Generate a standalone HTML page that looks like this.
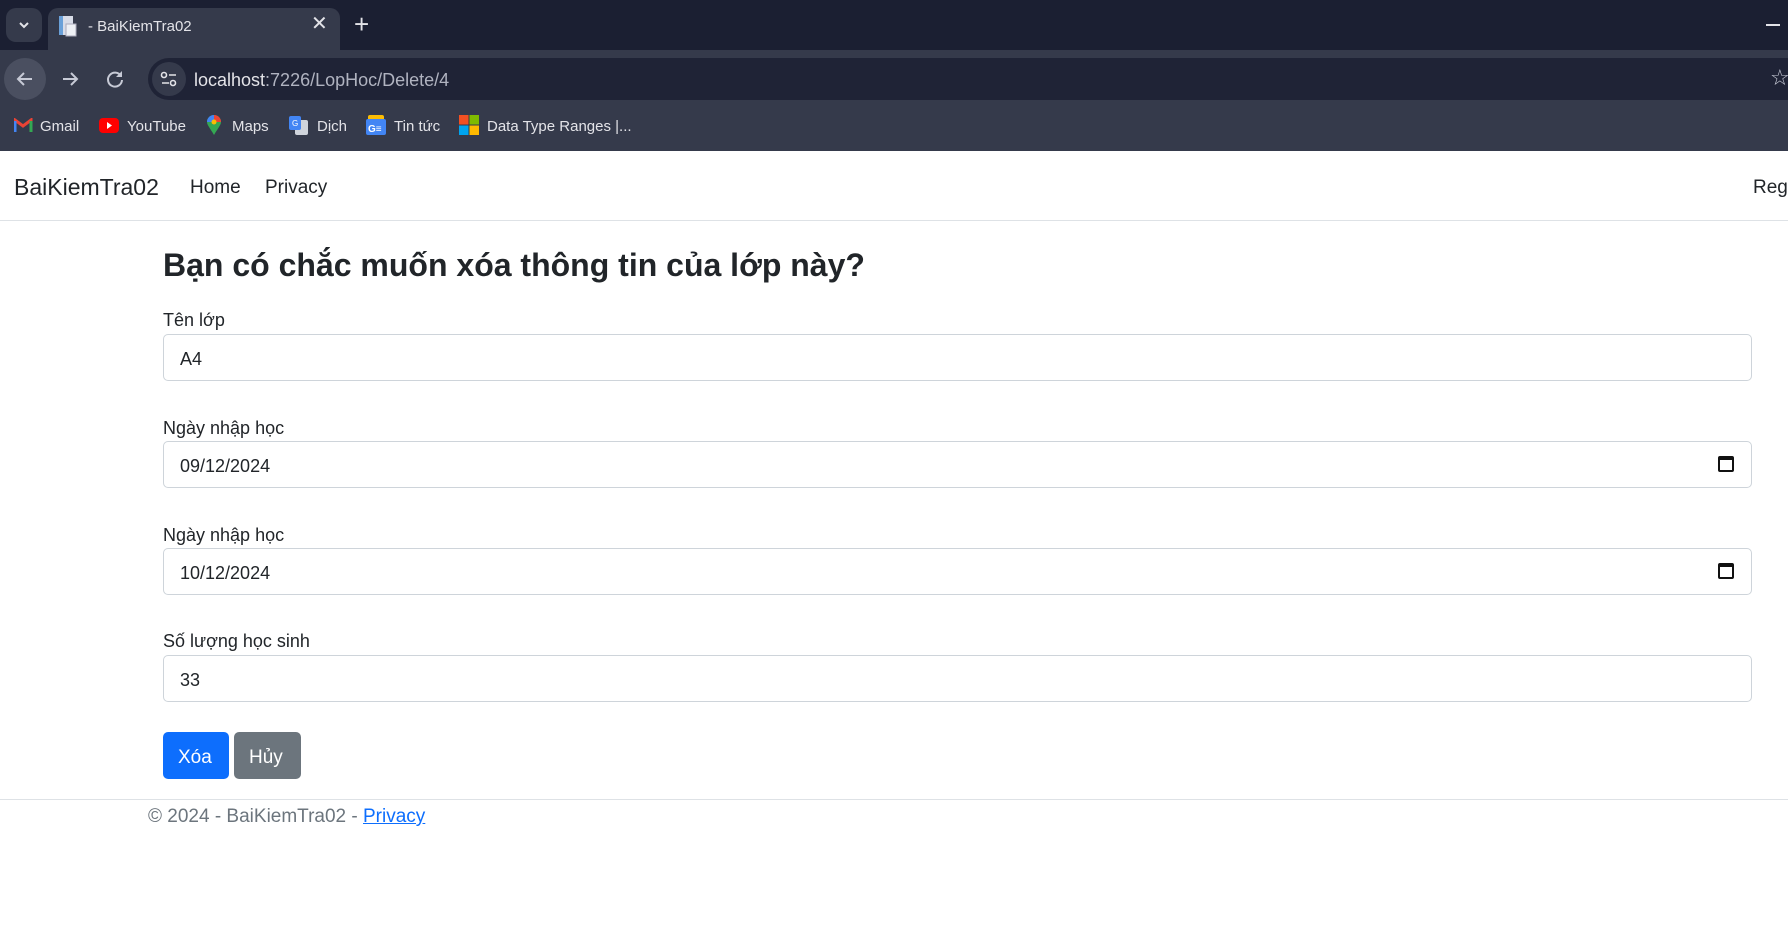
<!DOCTYPE html>
<html><head><meta charset="utf-8"><style>
*{box-sizing:border-box;margin:0;padding:0}
body{width:1788px;height:928px;overflow:hidden;background:#fff;font-family:"Liberation Sans","DejaVu Sans",sans-serif;color:#212529;position:relative}
.abs{position:absolute}
.tabbar{left:0;top:0;width:1788px;height:50px;background:#1b1f32}
.toolbar{left:0;top:50px;width:1788px;height:101px;background:#353a4b}
.omni{left:148px;top:58px;width:1660px;height:42px;border-radius:21px;background:#1f2336}
.tab{left:48px;top:8px;width:292px;height:42px;background:#353a4b;border-radius:10px 10px 0 0}
.t{white-space:nowrap;line-height:1}
.bm{top:119px;font-size:15px;color:#e3e3e8}
.input{position:absolute;left:163px;width:1589px;height:47px;border:1px solid #ced4da;border-radius:5px;background:#fff}
.input span{position:absolute;left:16px;top:15px;font-size:18px;color:#212529}
.lbl{position:absolute;left:163px;font-size:18px;color:#212529}
.cal{position:absolute;right:17px;top:14px;width:16px;height:16px;border:2px solid #111;border-top-width:4px;border-radius:2px}
</style></head><body>
<div class="abs tabbar"></div>
<div class="abs" style="left:6px;top:8px;width:36px;height:34px;border-radius:10px;background:#353a4b"></div>
<svg class="abs" style="left:17px;top:18px" width="14" height="14"><path d="M3 5l4 4 4-4" stroke="#e3e3e8" stroke-width="2" fill="none"/></svg>
<div class="abs tab"></div>
<svg class="abs" style="left:58px;top:15px" width="20" height="22"><rect x="1" y="1" width="14" height="19" fill="#d8dce8"/><rect x="1" y="1" width="4" height="19" fill="#6aa0d8"/><rect x="8" y="9" width="10" height="12" fill="#eef0f5" stroke="#aab" stroke-width="1"/></svg>
<div class="abs t" style="left:88px;top:19px;font-size:15px;color:#e3e3e8">- BaiKiemTra02</div>
<div class="abs t" style="left:311px;top:14px;font-size:20px;color:#e3e3e8">✕</div>
<div class="abs t" style="left:354px;top:11px;font-size:26px;color:#e3e3e8">+</div>
<div class="abs" style="left:1766px;top:24px;width:14px;height:1.5px;background:#e3e3e8"></div>
<div class="abs toolbar"></div>
<div class="abs" style="left:4px;top:58px;width:42px;height:42px;border-radius:21px;background:#4a4f60"></div>
<svg class="abs" style="left:14px;top:68px" width="22" height="22"><path d="M18 11H4M10 5l-6 6 6 6" stroke="#c7cad6" stroke-width="2" fill="none"/></svg>
<svg class="abs" style="left:59px;top:68px" width="22" height="22"><path d="M4 11h14M12 5l6 6-6 6" stroke="#c7cad6" stroke-width="2" fill="none"/></svg>
<svg class="abs" style="left:104px;top:68px" width="22" height="22"><path d="M17 8A7 7 0 1 0 18 12" stroke="#c7cad6" stroke-width="2" fill="none"/><path d="M18 3v6h-6" fill="#c7cad6"/></svg>
<div class="abs omni"></div>
<div class="abs" style="left:152px;top:62px;width:34px;height:34px;border-radius:17px;background:#353a4b"></div>
<svg class="abs" style="left:160px;top:70px" width="18" height="18"><circle cx="4" cy="5" r="2.5" stroke="#e3e3e8" stroke-width="1.6" fill="none"/><path d="M9 5h7M2 13h7" stroke="#e3e3e8" stroke-width="1.6"/><circle cx="13" cy="13" r="2.5" stroke="#e3e3e8" stroke-width="1.6" fill="none"/></svg>
<div class="abs t" style="left:194px;top:71px;font-size:18px;color:#e3e3e8">localhost<span style="color:#b0b3c0">:7226/LopHoc/Delete/4</span></div>
<div class="abs t" style="left:1770px;top:67px;font-size:22px;color:#c7cad6">☆</div>
<svg class="abs" style="left:14px;top:118px" width="19" height="15"><path d="M1 14V2l8 6 8-6v12" stroke="#ea4335" stroke-width="3" fill="none"/><path d="M1 14V3" stroke="#4285f4" stroke-width="3"/><path d="M17 14V3" stroke="#34a853" stroke-width="3"/></svg>
<div class="abs t bm" style="left:40px">Gmail</div>
<svg class="abs" style="left:99px;top:118px" width="20" height="15"><rect width="20" height="15" rx="4" fill="#f00"/><path d="M8 4v7l5-3.5z" fill="#fff"/></svg>
<div class="abs t bm" style="left:127px">YouTube</div>
<svg class="abs" style="left:207px;top:115px" width="14" height="20"><path d="M7 20C3 13 0 10 0 7a7 7 0 0 1 14 0c0 3-3 6-7 13z" fill="#34a853"/><path d="M0 7a7 7 0 0 1 7-7v7z" fill="#4285f4"/><path d="M7 0a7 7 0 0 1 7 7H7z" fill="#ea4335"/><circle cx="7" cy="7" r="2.5" fill="#fbbc04"/></svg>
<div class="abs t bm" style="left:232px">Maps</div>
<svg class="abs" style="left:289px;top:116px" width="20" height="19"><rect x="6" y="4" width="13" height="15" rx="2" fill="#d0d4dc"/><rect width="12" height="14" rx="2" fill="#4285f4"/><text x="3" y="10" font-size="8" fill="#fff" font-family="Liberation Sans">G</text></svg>
<div class="abs t bm" style="left:317px">Dịch</div>
<svg class="abs" style="left:366px;top:115px" width="20" height="20"><rect x="2" y="0" width="16" height="6" rx="2" fill="#fbbc04"/><rect y="4" width="20" height="16" rx="2" fill="#4285f4"/><text x="2" y="17" font-size="10" fill="#fff" font-weight="bold" font-family="Liberation Sans">G≡</text></svg>
<div class="abs t bm" style="left:394px">Tin tức</div>
<svg class="abs" style="left:459px;top:115px" width="20" height="20"><rect width="9.5" height="9.5" fill="#f25022"/><rect x="10.5" width="9.5" height="9.5" fill="#7fba00"/><rect y="10.5" width="9.5" height="9.5" fill="#00a4ef"/><rect x="10.5" y="10.5" width="9.5" height="9.5" fill="#ffb900"/></svg>
<div class="abs t bm" style="left:487px">Data Type Ranges |...</div>

<div class="abs" style="left:0;top:220px;width:1788px;height:1px;background:#dee2e6"></div>
<div class="abs t" style="left:14px;top:176px;font-size:23px;color:#212529">BaiKiemTra02</div>
<div class="abs t" style="left:190px;top:178px;font-size:19px;color:#212529">Home</div>
<div class="abs t" style="left:265px;top:178px;font-size:19px;color:#212529">Privacy</div>
<div class="abs t" style="left:1753px;top:178px;font-size:19px;color:#212529">Register</div>

<div class="abs t" style="left:163px;top:249px;font-size:32px;font-weight:bold;color:#212529">Bạn có chắc muốn xóa thông tin của lớp này?</div>

<div class="lbl t" style="top:311px">Tên lớp</div>
<div class="input" style="top:334px"><span class="t">A4</span></div>
<div class="lbl t" style="top:419px">Ngày nhập học</div>
<div class="input" style="top:441px"><span class="t">09/12/2024</span><div class="cal"></div></div>
<div class="lbl t" style="top:526px">Ngày nhập học</div>
<div class="input" style="top:548px"><span class="t">10/12/2024</span><div class="cal"></div></div>
<div class="lbl t" style="top:632px">Số lượng học sinh</div>
<div class="input" style="top:655px"><span class="t">33</span></div>

<div class="abs" style="left:163px;top:732px;width:66px;height:47px;background:#0d6efd;border-radius:5px"></div>
<div class="abs t" style="left:178px;top:748px;font-size:19px;color:#fff">Xóa</div>
<div class="abs" style="left:234px;top:732px;width:67px;height:47px;background:#6c757d;border-radius:5px"></div>
<div class="abs t" style="left:249px;top:748px;font-size:19px;color:#fff">Hủy</div>

<div class="abs" style="left:0;top:799px;width:1788px;height:1px;background:#dee2e6"></div>
<div class="abs t" style="left:148px;top:807px;font-size:19px;color:#6c757d">© 2024 - BaiKiemTra02 - <span style="color:#0d6efd;text-decoration:underline">Privacy</span></div>
</body></html>
